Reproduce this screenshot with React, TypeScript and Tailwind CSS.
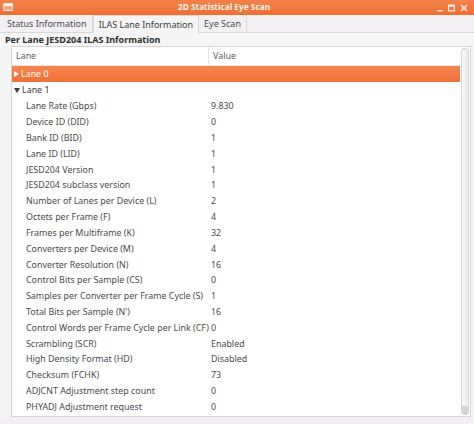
import React from 'react';

const ROWS: [string, string][] = [
  ['Lane Rate (Gbps)', '9.830'],
  ['Device ID (DID)', '0'],
  ['Bank ID (BID)', '1'],
  ['Lane ID (LID)', '1'],
  ['JESD204 Version', '1'],
  ['JESD204 subclass version', '1'],
  ['Number of Lanes per Device (L)', '2'],
  ['Octets per Frame (F)', '4'],
  ['Frames per Multiframe (K)', '32'],
  ['Converters per Device (M)', '4'],
  ['Converter Resolution (N)', '16'],
  ['Control Bits per Sample (CS)', '0'],
  ['Samples per Converter per Frame Cycle (S)', '1'],
  ['Total Bits per Sample (N\')', '16'],
  ['Control Words per Frame Cycle per Link (CF)', '0'],
  ['Scrambling (SCR)', 'Enabled'],
  ['High Density Format (HD)', 'Disabled'],
  ['Checksum (FCHK)', '73'],
  ['ADJCNT Adjustment step count', '0'],
  ['PHYADJ Adjustment request', '0'],
];

const TABS = ['Status Information', 'ILAS Lane Information', 'Eye Scan'];

function TitleBar() {
  return (
    <div className="relative flex h-[15px] items-center bg-gradient-to-b from-[#f58349] to-[#ef6f32] pl-[178px]">
      <div className="absolute left-[3px] top-[3px] h-[8px] w-[10px] rounded-[1px] border border-white/70 bg-white/35">
        <div className="h-[2px] bg-white/90" />
      </div>
      <span className="text-[8.3px] font-bold leading-none text-white/95">2D Statistical Eye Scan</span>
      <div className="absolute right-[6px] top-[4px] flex items-center gap-[5px] text-white/90">
        <svg width="6" height="8" viewBox="0 0 6 8">
          <rect x="0.5" y="6" width="5" height="1.5" fill="currentColor" />
        </svg>
        <svg width="7" height="8" viewBox="0 0 7 8">
          <rect x="0.6" y="1.1" width="5.8" height="5.8" fill="none" stroke="currentColor" strokeWidth="1.1" />
          <rect x="0.6" y="1" width="5.8" height="1.6" fill="currentColor" />
        </svg>
        <svg width="8" height="8" viewBox="0 0 8 8">
          <path d="M1.2 1.2 L6.8 6.8 M6.8 1.2 L1.2 6.8" stroke="currentColor" strokeWidth="1.6" />
        </svg>
      </div>
    </div>
  );
}

export default function App() {
  return (
    <div
      className="h-[424px] w-[474px] overflow-hidden bg-[#f2f0f2] text-[#4a4a4a]"
      style={{ fontFamily: '"Noto Sans", "Open Sans", sans-serif' }}
    >
      <TitleBar />

      {/* tab strip */}
      <div className="flex h-[18px] items-end border-b border-[#d9d7d9] pl-[2px] text-[9px]">
        {TABS.map((t, i) => (
          <div
            key={t}
            className={
              i === 1
                ? 'relative -mb-px flex h-[18px] items-center border-x border-t border-[#d9d7d9] bg-[#f6f5f6] px-[5px] text-[#3a3a3a]'
                : 'flex h-[17px] items-center border-r border-[#dedcde] px-[5px] text-[#4a4a4a]'
            }
          >
            {t}
          </div>
        ))}
      </div>

      <div className="bg-[#f6f5f6]">
        <div className="px-[5px] pt-[1px] text-[9px] font-bold leading-[11px] text-[#2e2e2e]">
          Per Lane JESD204 ILAS Information
        </div>

        {/* tree view */}
        <div className="ml-[11px] mr-[3px] mt-[1px] flex h-[371px] border border-[#d6d4d6] bg-white">
          <div className="flex min-w-0 flex-1 flex-col text-[8.9px]">
            <div className="flex h-[19px] shrink-0 items-center border-b border-[#e4e2e4] text-[#5e5e5e]">
              <div className="w-[197px] border-r border-[#e4e2e4] pl-[4px] leading-[18px]">Lane</div>
              <div className="pl-[4px]">Value</div>
            </div>

            <div className="flex h-[16px] items-center bg-gradient-to-b from-[#f58650] to-[#ef7035] pl-[1px] text-white">
              <svg width="7" height="8" viewBox="0 0 7 8" className="mr-[1px]">
                <path d="M1 1 L6 4 L1 7 Z" fill="white" />
              </svg>
              Lane 0
            </div>
            <div className="flex h-[16px] items-center pl-[1px] text-[#3a3a3a]">
              <svg width="8" height="7" viewBox="0 0 8 7" className="mr-[1px]">
                <path d="M1 1 L7 1 L4 6 Z" fill="#3a3a3a" />
              </svg>
              Lane 1
            </div>

            {ROWS.map(([k, v]) => (
              <div key={k} className="flex h-[15.84px] items-center whitespace-nowrap">
                <div className="w-[186px] shrink-0 pl-[14px]">{k}</div>
                <div className="pl-[13px]">{v}</div>
              </div>
            ))}
          </div>

          {/* vertical scrollbar */}
          <div className="flex w-[10px] shrink-0 flex-col bg-white p-[1px]">
            <div className="flex flex-1 flex-col overflow-hidden rounded-[3px] border border-[#d8d6d8] bg-gradient-to-r from-[#f8f8f8] to-[#ececec]">
              <div className="flex-1" />
              <div className="h-[8px] bg-[#d4d4d4]" />
            </div>
          </div>
        </div>
      </div>
    </div>
  );
}
